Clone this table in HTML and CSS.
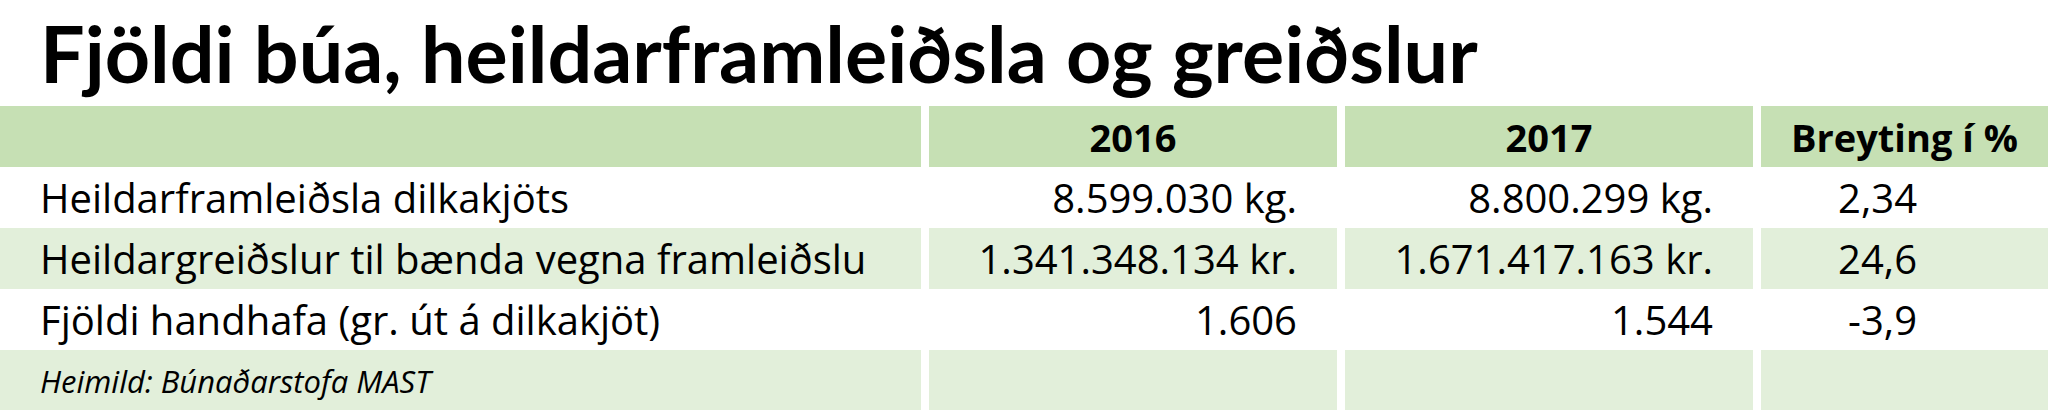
FILE: index.html
```html
<!DOCTYPE html>
<html lang="is">
<head>
    <meta charset="UTF-8">
    <title>Fjöldi búa, heildarframleiðsla og greiðslur</title>
    <link rel="stylesheet" href="styles.css">
</head>
<body>
    <h1 class="title">Fjöldi búa, heildarframleiðsla og greiðslur</h1>

    <div class="table">
        <div class="cell head"></div>
        <div class="cell head center">2016</div>
        <div class="cell head center">2017</div>
        <div class="cell head center">Breyting í %</div>

        <div class="cell label">Heildarframleiðsla dilkakjöts</div>
        <div class="cell num">8.599.030 kg.</div>
        <div class="cell num">8.800.299 kg.</div>
        <div class="cell pct">2,34</div>

        <div class="cell label alt">Heildargreiðslur til bænda vegna framleiðslu</div>
        <div class="cell num alt">1.341.348.134 kr.</div>
        <div class="cell num alt">1.671.417.163 kr.</div>
        <div class="cell pct alt">24,6</div>

        <div class="cell label">Fjöldi handhafa (gr. út á dilkakjöt)</div>
        <div class="cell num">1.606</div>
        <div class="cell num">1.544</div>
        <div class="cell pct">-3,9</div>

        <div class="cell source alt">Heimild: Búnaðarstofa MAST</div>
        <div class="cell alt"></div>
        <div class="cell alt"></div>
        <div class="cell alt"></div>
    </div>
</body>
</html>
```

FILE: styles.css
```css
body {
    margin: 0;
    font-family: "Open Sans", Lato, sans-serif;
    color: #000;
    background-color: #fff;
}

.title {
    margin: 0;
    height: 106px;
    padding-left: 40px;
    font-family: Lato, "Open Sans", sans-serif;
    font-size: 79px;
    font-weight: bold;
    line-height: 106px;
    box-sizing: border-box;
}

.table {
    display: grid;
    grid-template-columns: 921px 408px 408px 287px;
    grid-auto-rows: 61px;
    column-gap: 8px;
    width: 2048px;
}

.cell {
    display: flex;
    align-items: center;
    font-size: 40px;
    background-color: #fff;
    white-space: nowrap;
}

.head {
    background-color: #c6e0b4;
    font-size: 38px;
    font-weight: bold;
}

.alt {
    background-color: #e2efda;
}

.center {
    justify-content: center;
}

.label {
    padding-left: 40px;
}

.num {
    justify-content: flex-end;
    padding-right: 40px;
}

.pct {
    justify-content: flex-end;
    padding-right: 131px;
}

.source {
    padding-left: 40px;
    font-size: 31px;
    font-style: italic;
}
```
